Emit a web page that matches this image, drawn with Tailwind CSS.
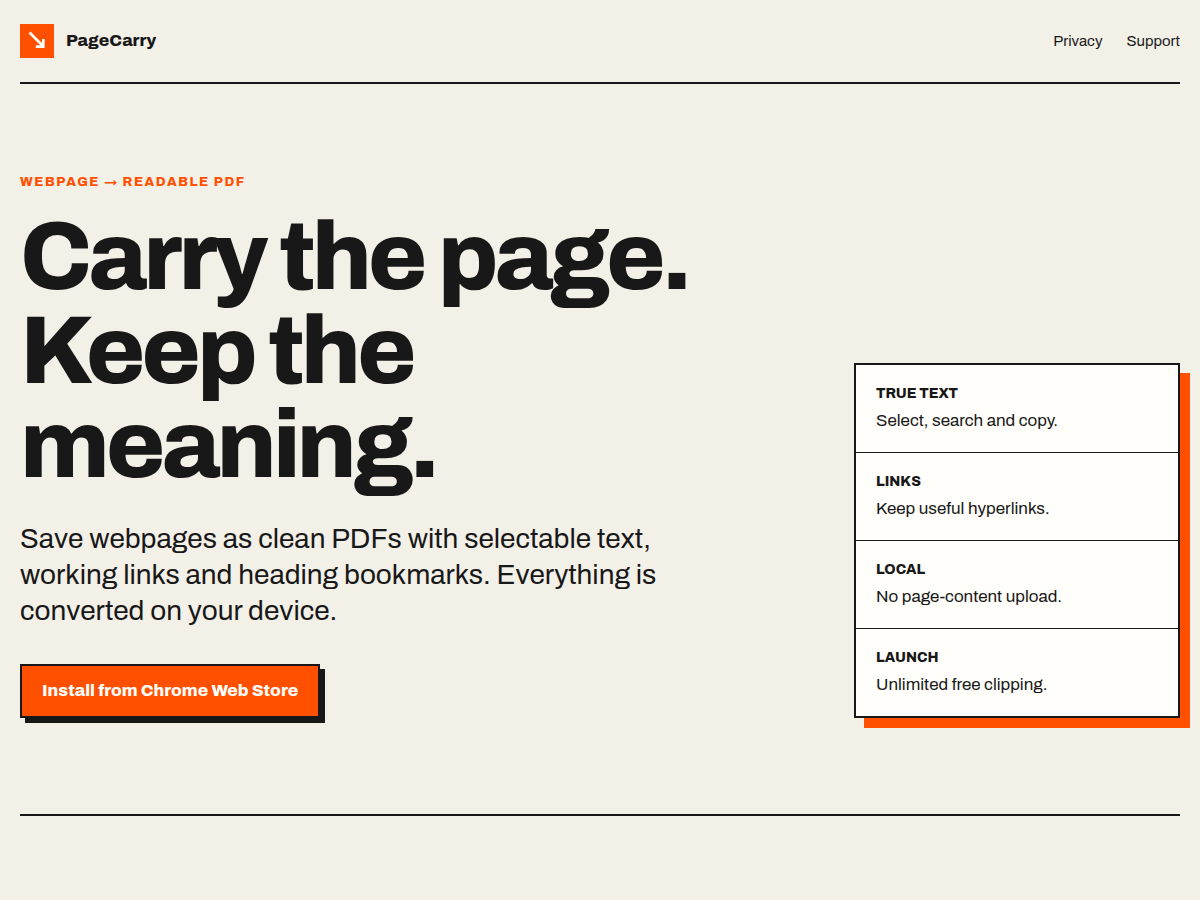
<!DOCTYPE html>
<html lang="en">
<head>
    <meta charset="UTF-8">
    <meta name="viewport" content="width=device-width, initial-scale=1.0">
    <title>PageCarry</title>
    <script src="https://cdn.jsdelivr.net/npm/@tailwindcss/browser@4"></script>
</head>
<body class="min-h-screen bg-[#f3f0e8] font-[Archivo,'Liberation_Sans',Arial,sans-serif] text-[#181818]">
    <div class="mx-auto max-w-7xl px-5">
        <header class="flex items-center justify-between border-b-2 border-[#181818] py-6">
            <a href="#" class="flex items-center gap-3 text-[17px] leading-6 font-extrabold">
                <span class="grid size-[34px] place-items-center bg-[#ff5000]">
                    <svg class="size-[34px]" viewBox="0 0 34 34" fill="none" stroke="#fffefa" stroke-width="2.7" aria-hidden="true">
                        <path d="M9.5 8.5 23 22M23.3 15V22.6H15.8" />
                    </svg>
                </span>
                PageCarry
            </a>
            <nav class="flex gap-6 text-[15px] leading-[22px]">
                <a href="#">Privacy</a>
                <a href="#">Support</a>
            </nav>
        </header>

        <!-- Hero -->
        <main class="flex flex-col gap-10 border-b-2 border-[#181818] pt-22 pb-24 md:flex-row md:items-end md:justify-between">
            <div class="max-w-[700px]">
                <p class="text-[13px] leading-5 font-extrabold tracking-[0.12em] text-[#ff5000]">WEBPAGE → READABLE PDF</p>
                <h1 class="mt-[18px] text-[96px] leading-[94px] font-extrabold tracking-[-4px]">Carry the page. Keep the meaning.</h1>
                <p class="mt-[29px] max-w-[650px] text-[28px] leading-9">Save webpages as clean PDFs with selectable text, working links and heading bookmarks. Everything is converted on your device.</p>
                <a href="#" class="mt-[35px] inline-block border-2 border-[#181818] bg-[#ff5000] px-5 py-[13px] text-[17px] leading-6 font-extrabold text-[#fffefa] shadow-[5px_5px_0_#181818]">Install from Chrome Web Store</a>
            </div>

            <!-- Features -->
            <dl class="w-full shrink-0 divide-y divide-[#181818] border-2 border-[#181818] bg-[#fffefa] shadow-[10px_10px_0_#ff5000] md:w-[326px]">
                <div class="px-5 pt-[21px] pb-[19px]">
                    <dt class="text-sm leading-4 font-extrabold">TRUE TEXT</dt>
                    <dd class="mt-[7px] text-[17px] leading-6">Select, search and copy.</dd>
                </div>
                <div class="px-5 pt-[21px] pb-[19px]">
                    <dt class="text-sm leading-4 font-extrabold">LINKS</dt>
                    <dd class="mt-[7px] text-[17px] leading-6">Keep useful hyperlinks.</dd>
                </div>
                <div class="px-5 pt-[21px] pb-[19px]">
                    <dt class="text-sm leading-4 font-extrabold">LOCAL</dt>
                    <dd class="mt-[7px] text-[17px] leading-6">No page-content upload.</dd>
                </div>
                <div class="px-5 pt-[21px] pb-[19px]">
                    <dt class="text-sm leading-4 font-extrabold">LAUNCH</dt>
                    <dd class="mt-[7px] text-[17px] leading-6">Unlimited free clipping.</dd>
                </div>
            </dl>
        </main>
    </div>
</body>
</html>
